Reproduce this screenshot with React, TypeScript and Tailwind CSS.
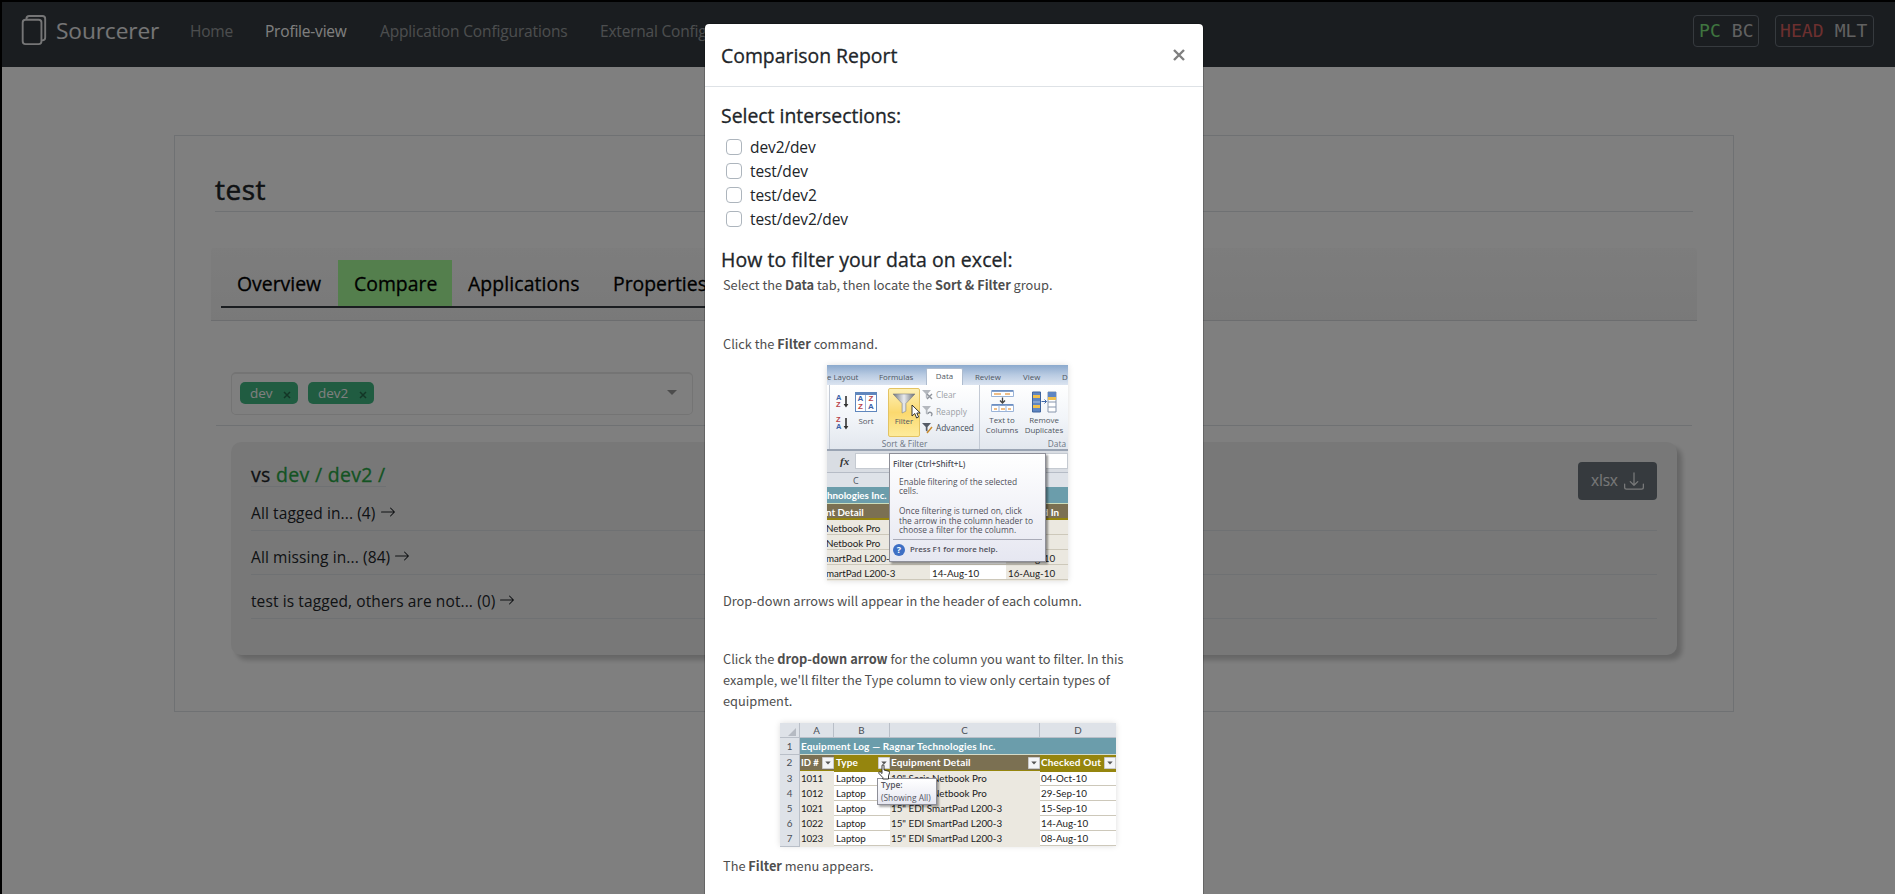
import type { ReactNode } from "react";
import { BsArrowRight, BsDownload, BsFiles } from "react-icons/bs";

function Navbar() {
  return (
    <header className="flex h-[65px] items-start bg-[#343a40] text-[15.5px] leading-6 whitespace-nowrap text-white/50">
      <div className="flex w-[188px] pl-4 text-white/90">
        <BsFiles className="mt-[13px] mr-[8px] size-[30px] shrink-0" />
        <span className="mt-[11px] text-[22.7px] leading-9 tracking-[-0.1px]">Sourcerer</span>
      </div>
      <nav className="flex flex-1 pt-[17px] tracking-[-0.2px]">
        <a className="w-[75px]">Home</a>
        <a className="w-[115px] text-white">Profile-view</a>
        <a className="w-[220px] tracking-[-0.14px]">Application Configurations</a>
        <a>External Configurations</a>
      </nav>
      <div className="mt-[13px] mr-[21px] flex gap-4 font-['DejaVu_Sans_Mono',monospace] text-[18px] leading-[30px] tracking-[0.1px] text-[#c3c3c3]">
        <span className="h-8 w-[66px] rounded-[4px] border border-[#6c757d] pl-[5px]">
          <span className="text-[#7ee87e]">PC</span> BC
        </span>
        <span className="h-8 w-[99px] rounded-[4px] border border-[#6c757d] pl-[4px]">
          <span className="text-[#d9605f]">HEAD</span> MLT
        </span>
      </div>
    </header>
  );
}

function Chip({ label, width }: { label: string; width: string }) {
  return (
    <span className={`flex h-[22px] items-center rounded-[5px] bg-[#41b883] pl-[10px] ${width}`}>
      <span className="flex-1 text-[13.5px] leading-[22px] text-white">{label}</span>
      <svg viewBox="0 0 8 8" className="mt-[3px] mr-[7px] size-[8px]" stroke="#266d4d" strokeWidth="1.5">
        <path d="M1 1l6 6M7 1L1 7" />
      </svg>
    </span>
  );
}

function ResultRow({ children }: { children: ReactNode }) {
  return (
    <div className="mb-[14px] flex h-[30px] items-start gap-1 border-b border-[#dee2e6]">
      <span className="text-[15.5px] leading-6 tracking-[0.1px]">{children}</span>
      <BsArrowRight className="mt-[3px] size-4" />
    </div>
  );
}

function ProfilePage() {
  return (
    <main className="mt-[68px] ml-[172px] h-[577px] w-[1560px] border border-[#dee2e6] px-[36px] text-[#212529]">
      <div className="mx-1 h-[76px] border-b border-[#dee2e6] pt-[36px]">
        <h3 className="text-[28px] leading-[34px] tracking-[0.5px] [-webkit-text-stroke:0.5px]">test</h3>
      </div>
      <div className="mt-9 h-[73px] rounded-t-[3px] border-b border-[#d8dbde] bg-gradient-to-b from-[#fafafa] to-[#f3f3f3] px-[10px] pt-3 text-black">
        <div className="flex h-12 w-[560px] border-b-2 border-[#343a40] text-[19.4px] leading-[46px] whitespace-nowrap [-webkit-text-stroke:0.3px]">
          <span className="w-[117px] pt-px pl-4">Overview</span>
          <span className="w-[114px] bg-[#a8ff9a] pt-px pl-4">Compare</span>
          <span className="w-[144px] pt-px pl-4 tracking-[0.1px]">Applications</span>
          <span className="pt-px pl-[17px]">Properties</span>
        </div>
      </div>
      <div className="mt-[51px] ml-5 flex h-[43px] w-[462px] items-start gap-[10px] rounded-[5px] border border-t-2 border-[#e8e8e8] pt-2 pl-2">
        <Chip label="dev" width="w-[58px]" />
        <Chip label="dev2" width="w-[66px]" />
        <svg viewBox="0 0 10 5" className="mt-2 mr-[15px] ml-auto h-[5px] w-[10px]" fill="#999">
          <path d="M0 0h10L5 5z" />
        </svg>
      </div>
      <div className="mx-[5px] mt-[10px] h-px bg-[#dee2e6]" />
      <section className="mt-4 mr-[20px] ml-5 h-[213px] rounded-[10px] bg-[#f1f1f1] px-5 pt-5 shadow-[5px_5px_5px_#ccc]">
        <div className="flex h-[49px] items-start justify-between">
          <h5 className="h-[25px] border-b border-[#dee2e6] text-[19.5px] leading-[26px] tracking-[0.3px] [-webkit-text-stroke:0.3px]">
            vs <span className="text-[#28a745]">dev / dev2 /</span>
          </h5>
          <button className="flex h-[38px] w-[79px] items-center justify-between rounded-[4px] bg-[#6c757d] pr-[13px] pl-[13px] text-[15.5px] tracking-[-0.2px] text-white/90">
            xlsx
            <BsDownload className="size-5" />
          </button>
        </div>
        <div className="-mt-[13px] pt-[3px]">
          <ResultRow>All tagged in... (4)</ResultRow>
          <ResultRow>All missing in... (84)</ResultRow>
          <ResultRow>test is tagged, others are not... (0)</ResultRow>
        </div>
      </section>
    </main>
  );
}

function AzIcon({ top, bottom }: { top: string; bottom: string }) {
  return (
    <span className="flex h-[13px] items-center font-['Liberation_Sans',sans-serif] text-[7.5px] leading-[6.5px] font-bold">
      <span className="flex w-[7px] flex-col">
        <span className={top === "A" ? "text-[#3a5fa8]" : "text-[#b8434a]"}>{top}</span>
        <span className={bottom === "A" ? "text-[#3a5fa8]" : "text-[#b8434a]"}>{bottom}</span>
      </span>
      <svg viewBox="0 0 6 12" className="h-3 w-[6px]" fill="#333">
        <path d="M2.2 0h1.6v8h1.6L3 11.5.6 8h1.6z" />
      </svg>
    </span>
  );
}

function SmallFilter({ on, label, mark }: { on?: boolean; label: string; mark: string }) {
  return (
    <span className={`flex h-[16.5px] items-center gap-[3px] ${on ? "text-[#444c58]" : "text-[#9b9fa6]"}`}>
      <svg viewBox="0 0 11 11" className="size-[11px]">
        <path d="M0 0h9L5.5 4v5L3.8 7.5V4z" fill={on ? "#555b66" : "#b4b8be"} />
        <path d={mark} fill="none" stroke={on ? "#c98a2b" : "#8f949c"} strokeWidth="1.4" />
      </svg>
      {label}
    </span>
  );
}

const sheetRows = [
  ["Netbook Pro", "", ""],
  ["Netbook Pro", "", ""],
  ["martPad L200-3", "", "16-Aug-10"],
  ["martPad L200-3", "14-Aug-10", "16-Aug-10"],
];

function RibbonFigure() {
  return (
    <figure className="relative mx-auto h-[216px] w-[241px] overflow-hidden bg-[#ebe8e0] font-['Open_Sans',sans-serif] text-[7.9px] leading-[10px] whitespace-nowrap text-[#4f5661]">
      <div className="flex h-5 items-end bg-gradient-to-b from-[#8ba9cd] via-[#b9cbe2] to-[#dbe4f0]">
        <span className="w-[52px] pb-[3px]">e Layout</span>
        <span className="w-[47px] pb-[3px]">Formulas</span>
        <span className="h-[17px] w-[37px] rounded-t-[2px] border border-b-0 border-[#aebccf] bg-white pt-[2px] text-center">Data</span>
        <span className="w-[48px] pb-[3px] pl-[12px]">Review</span>
        <span className="w-[51px] pb-[3px] pl-[12px]">View</span>
        <span className="pb-[3px]">D</span>
      </div>
      <div className="flex h-[66px] border-b-2 border-[#9aa4b3] bg-gradient-to-b from-white via-[#f2f5f9] to-[#e2e7ee]">
        <div className="w-[3px] border-r border-[#c3cad5]" />
        <div className="flex w-[150px] flex-col border-r border-[#c3cad5]">
          <div className="flex h-[53px]">
            <div className="flex w-[25px] flex-col gap-[9px] pt-[10px] pl-[6px]">
              <AzIcon top="A" bottom="Z" />
              <AzIcon top="Z" bottom="A" />
            </div>
            <div className="flex w-[22px] flex-col items-center pt-[7px]">
              <span className="grid h-[20px] w-[22px] grid-cols-2 border border-t-[3px] border-[#5f86bd] bg-white text-center font-['Liberation_Sans',sans-serif] text-[8px] leading-[8px] font-bold text-[#3a5fa8]">
                <span className="border-r border-[#9cb4d6]">A</span>
                <span className="text-[#b8434a]">Z</span>
                <span className="border-r border-[#9cb4d6] text-[#b8434a]">Z</span>
                <span>A</span>
              </span>
              <span className="mt-[4px]">Sort</span>
            </div>
            <div className="relative mt-[3px] ml-[11px] flex h-[49px] w-[32px] flex-col items-center rounded-[2px] border border-[#e3c363] bg-gradient-to-b from-[#fdf0b4] via-[#fbd96f] to-[#fdeB9a] pt-[4px]">
              <svg viewBox="0 0 24 22" className="h-[21px] w-6">
                <defs>
                  <linearGradient id="funnel">
                    <stop offset="0" stopColor="#6f747b" />
                    <stop offset="0.5" stopColor="#e9ebee" />
                    <stop offset="1" stopColor="#666b72" />
                  </linearGradient>
                </defs>
                <path d="M.5 1h23L14 11v8l-4 2V11z" fill="url(#funnel)" stroke="#777c84" strokeWidth=".6" />
              </svg>
              <span className="mt-[2px]">Filter</span>
              <svg viewBox="0 0 10 15" className="absolute top-[15px] left-[22px] h-[15px] w-[10px]">
                <path d="M1 1v11l2.8-2.500L5.600 14l2-1-1.800-4h3.400z" fill="#fff" stroke="#222" strokeWidth=".9" />
              </svg>
            </div>
            <div className="ml-[2px] pt-[2px] text-[8.3px]">
              <SmallFilter label="Clear" mark="M5 4l5 5M10 4L5 9" />
              <SmallFilter label="Reapply" mark="M6 8a2 2 0 1 1 3 2" />
              <SmallFilter on label="Advanced" mark="M5 10l5-6" />
            </div>
          </div>
          <span className="pt-[1px] text-center text-[8.3px] text-[#6d7683]">Sort &amp; Filter</span>
        </div>
        <div className="flex flex-1 flex-col">
          <div className="flex h-[53px] pt-[4px] leading-[9.6px]">
            <div className="flex w-[44px] flex-col items-center text-center">
              <svg viewBox="0 0 23 24" className="h-6 w-[23px]">
                <path d="M.5 1.500h22v6H.5zM.5 15.500h22v7H.5z" fill="#fff" stroke="#9bb4d8" />
                <path d="M1 2h21M1 16h21" stroke="#5d83bb" strokeWidth="1.500" />
                <path d="M3 5h7M14 5h5M3 20h3M10 20h4M17 20h3" stroke="#e9a860" strokeWidth="1.300" />
                <path d="M8 16v6M15 16v6" stroke="#9bb4d8" />
                <path d="M11.500 8.500v5M9 11.500l2.500 2.500 2.500-2.500" stroke="#444" fill="none" strokeWidth="1.300" />
              </svg>
              <span className="mt-[3px]">Text to<br />Columns</span>
            </div>
            <div className="flex w-[40px] flex-col items-center text-center">
              <svg viewBox="0 0 25 22" className="mt-[2px] h-[22px] w-[25px]">
                <path d="M.5 1h8v20h-8z" fill="#5f86c2" stroke="#3e639c" />
                <path d="M1 4h7v3H1zM1 14h7v3H1z" fill="#f0c04e" />
                <path d="M1 11h7" stroke="#a9c1e4" />
                <path d="M16 1h8v20h-8zM16 11h8M16 16h8" fill="#fff" stroke="#8796ad" />
                <path d="M16 1h8v5h-8z" fill="#5f86c2" />
                <path d="M16 6h8v3h-8z" fill="#f0c04e" />
                <path d="M9.500 10.500h5M12.500 8.500l2 2-2 2" fill="none" stroke="#3f67a8" />
              </svg>
              <span className="mt-[3px]">Remove<br />Duplicates</span>
            </div>
          </div>
          <span className="pt-[1px] pr-[2px] text-right text-[8.3px] text-[#6d7683]">Data</span>
        </div>
      </div>
      <div className="flex h-[21px] bg-[#d9dde3] pt-[2px] pb-[3px]">
        <span className="w-7 pl-[13px] font-['Liberation_Serif',serif] text-[11px] leading-4 font-bold text-[#333] italic">fx</span>
        <span className="flex-1 border border-[#c5cad1] bg-white" />
      </div>
      <div className="h-[15px] w-full border-t border-[#b6bcc6] bg-[#dee2e8] pl-[26px] text-[9px] leading-[15px]">C</div>
      <div className="h-4 bg-[#6b9dab] pt-px font-['Lato',sans-serif] text-[9.8px] leading-[15px] font-bold text-white">hnologies Inc.</div>
      <div className="flex h-[17px] justify-between border-t border-b-2 border-t-[#cdb] border-b-[#95850e] bg-[#7b7052] pr-[9px] font-['Lato',sans-serif] text-[9.8px] leading-[16px] font-bold text-white">
        <span className="-ml-px">nt Detail</span>
        <span>d In</span>
      </div>
      <div className="font-['Lato',sans-serif] text-[9.8px] leading-[16px] text-[#1c1c1c]">
        {sheetRows.map(([name, out, back], i) => (
          <div key={i} className="flex h-[15px] border-b border-[#cdc8ba]">
            <span className="-ml-px w-[104px] tracking-[-0.05px]">{name}</span>
            <span className="w-[76px] bg-white pl-[2px]">{out}</span>
            <span className="pl-[2px]">{back}</span>
          </div>
        ))}
      </div>
      <div className="absolute top-[88px] left-[62px] h-[109px] w-[157px] border border-[#8e8f98] bg-gradient-to-b from-white to-[#e6e7f1] pt-[5px] pl-[3px] leading-[9.7px] text-[#50505a] shadow-[2px_2px_2px_#0006]">
        <p className="text-[8px] font-semibold">Filter (Ctrl+Shift+L)</p>
        <div className="mt-[8px] ml-[6px] h-[62px] text-[8.4px]">
          <p>Enable filtering of the selected<br />cells.</p>
          <p className="mt-[9.700px]">Once filtering is turned on, click<br />the arrow in the column header to<br />choose a filter for the column.</p>
        </div>
        <div className="mr-[3px] flex h-[22px] items-center gap-[5px] border-t border-[#a9abb8] text-[7.9px] font-semibold">
          <span className="flex size-3 items-center justify-center rounded-full bg-[#3e6fc4] text-[9px] font-bold text-white">?</span>
          Press F1 for more help.
        </div>
      </div>
    </figure>
  );
}

function FilterArrow() {
  return (
    <svg viewBox="0 0 12 12" className="ml-auto size-3 shrink-0">
      <path d="M.5.5h11v11H.5z" fill="#f4f5f7" stroke="#c9c9c9" />
      <path d="M3.300 4.500h5.400L6 7.500z" fill="#555" />
    </svg>
  );
}

const equipment = [
  ["3", "1011", "10\" Soris Netbook Pro", "04-Oct-10"],
  ["4", "1012", "10\" Soris Netbook Pro", "29-Sep-10"],
  ["5", "1021", "15\" EDI SmartPad L200-3", "15-Sep-10"],
  ["6", "1022", "15\" EDI SmartPad L200-3", "14-Aug-10"],
  ["7", "1023", "15\" EDI SmartPad L200-3", "08-Aug-10"],
];

const sheetGrid = "grid grid-cols-[20px_34px_56px_150px_76px]";
const rowHead = "border-r border-b border-[#b9bfc8] bg-[#dee2e8] text-center text-[#4a4f57]";

function SheetFigure() {
  return (
    <figure className="relative ml-[57px] h-[123px] w-[336px] bg-white font-['Lato',sans-serif] text-[9.8px] leading-[15px] whitespace-nowrap text-[#1c1c1c] shadow-[0_0_6px_#0002]">
      <div className={`${sheetGrid} h-[15px] border-b border-[#b9bfc8] bg-[#dee2e8] text-center text-[#4a4f57]`}>
        <span className="flex items-end justify-end border-r border-[#b9bfc8] pr-[3px] pb-[2px]">
          <svg viewBox="0 0 8 8" className="size-2" fill="#b5bac2"><path d="M8 0v8H0z" /></svg>
        </span>
        <span className="border-r border-[#b9bfc8]">A</span>
        <span className="border-r border-[#b9bfc8]">B</span>
        <span className="border-r border-[#b9bfc8]">C</span>
        <span>D</span>
      </div>
      <div className="flex h-[17px] leading-[17px]">
        <span className={`w-5 ${rowHead}`}>1</span>
        <span className="flex-1 border-b border-[#d5dbc8] bg-[#6b9dab] pl-px text-[10px] leading-4 font-bold tracking-[0.16px] text-white">Equipment Log — Ragnar Technologies Inc.</span>
      </div>
      <div className={`${sheetGrid} h-4 text-[10px] font-bold text-white`}>
        <span className={`${rowHead} font-normal`}>2</span>
        <span className="flex items-center border-b-2 border-[#95850e] bg-[#7b7052] pl-px text-[9.5px]">ID #<FilterArrow /></span>
        <span className="flex items-center border-b-2 border-[#95850e] bg-[#95850e] pl-[2px] tracking-[0.16px]">Type<FilterArrow /></span>
        <span className="flex items-center border-b-2 border-[#95850e] bg-[#7b7052] pl-px tracking-[0.16px]">Equipment Detail<FilterArrow /></span>
        <span className="flex items-center border-b-2 border-[#95850e] bg-[#95850e] pl-px tracking-[0.16px]">Checked Out<FilterArrow /></span>
      </div>
      {equipment.map(([row, id, detail, date]) => (
        <div key={row} className={`${sheetGrid} h-[15px] border-b border-[#cdc8ba]`}>
          <span className={rowHead}>{row}</span>
          <span className="bg-[#ebe8e0] pl-px tracking-[-0.2px]">{id}</span>
          <span className="pl-[2px]">Laptop</span>
          <span className="bg-[#ebe8e0] pl-px">{detail}</span>
          <span className="pl-px">{date}</span>
        </div>
      ))}
      <div className="absolute top-[55px] left-[97px] h-[27px] w-[60px] border border-[#8e8f98] bg-gradient-to-b from-white to-[#e6e7f1] pl-[3px] font-['Open_Sans',sans-serif] text-[8.4px] leading-[12.500px] text-[#55555f] shadow-[2px_2px_2px_#0005]">
        <p className="font-semibold">Type:</p>
        <p>(Showing All)</p>
      </div>
      <svg viewBox="0 0 12 16" className="absolute top-[41px] left-[98px] h-[16px] w-3">
        <path d="M4 8V2q0-1.400 1-1.400T6 2v4l4.500 1.200q1 .4 1 1.500L10.500 12v3H4.800v-1.500L1 9.500q-.6-1.200.4-1.600.9-.2 2.600 1.600z" fill="#fff" stroke="#222" strokeWidth=".9" />
      </svg>
    </figure>
  );
}

const intersections = ["dev2/dev", "test/dev", "test/dev2", "test/dev2/dev"];

function ReportModal() {
  return (
    <div className="absolute top-[21px] left-[702px] h-[1100px] w-[500px] rounded-[5px] border border-black/20 bg-white bg-clip-padding text-[#212529]">
      <div className="flex h-[63px] items-start justify-between border-b border-[#dee2e6] pt-4 pr-[18px] pl-4">
        <h5 className="mt-px text-[19.4px] leading-[30px] [-webkit-text-stroke:0.3px]">Comparison Report</h5>
        <svg viewBox="0 0 12 12" className="mt-[9px] size-3" stroke="#7f7f7f" strokeWidth="2.400">
          <path d="M1 1l10 10M11 1L1 11" />
        </svg>
      </div>
      <div className="px-4 pt-4">
        <h5 className="text-[19.4px] leading-[26px] [-webkit-text-stroke:0.3px]">Select intersections:</h5>
        <ul className="mt-[6px]">
          {intersections.map((name) => (
            <li key={name} className="flex h-6 items-center gap-2 pl-[5px] text-[15.5px] tracking-[-0.1px]">
              <span className="size-4 rounded-[4px] border border-[#adb5bd]" />
              <span className="mt-px">{name}</span>
            </li>
          ))}
        </ul>
        <h5 className="mt-[16px] text-[19.5px] leading-[26px] tracking-[0.06px] [-webkit-text-stroke:0.3px]">How to filter your data on excel:</h5>
        <div className="pl-[2px] font-['Noto_Sans_CJK_SC',sans-serif] text-[12.79px] leading-[21px] text-[#4e4e4e]">
          <p className="mt-[1px]">Select the <b>Data</b> tab, then locate the <b>Sort &amp; Filter</b> group.</p>
          <p className="mt-[38px]">Click the <b>Filter</b> command.</p>
          <div className="mt-[11px] ml-[104px] w-[241px] shadow-[0_0_6px_#0002]"><RibbonFigure /></div>
          <p className="mt-[9px]">Drop-down arrows will appear in the header of each column.</p>
          <p className="mt-[37px] whitespace-nowrap">
            Click the <b>drop-down arrow</b> for the column you want to filter. In this<br />
            example, we'll filter the Type column to view only certain types of<br />
            equipment.
          </p>
          <div className="mt-[12px]"><SheetFigure /></div>
          <p className="mt-[9px]">The <b>Filter</b> menu appears.</p>
        </div>
      </div>
    </div>
  );
}

export default function App() {
  return (
    <div className="relative h-[894px] w-[1895px] overflow-hidden border-t-2 border-l-2 border-black bg-white font-['Open_Sans','Noto_Sans',sans-serif]">
      <Navbar />
      <ProfilePage />
      <div className="absolute inset-0 bg-black/50" />
      <ReportModal />
    </div>
  );
}
